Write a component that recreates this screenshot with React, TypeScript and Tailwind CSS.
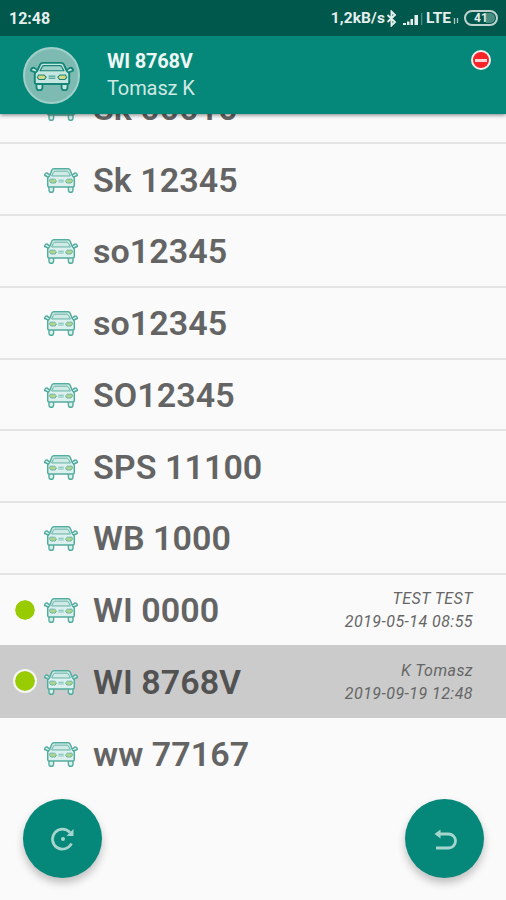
type Vehicle = {
  plate: string;
  online?: boolean;
  selected?: boolean;
  driver?: string;
  time?: string;
};

const vehicles: Vehicle[] = [
  { plate: "Sk 00010" },
  { plate: "Sk 12345" },
  { plate: "so12345" },
  { plate: "so12345" },
  { plate: "SO12345" },
  { plate: "SPS 11100" },
  { plate: "WB 1000" },
  { plate: "WI 0000", online: true, driver: "TEST TEST", time: "2019-05-14 08:55" },
  { plate: "WI 8768V", online: true, selected: true, driver: "K Tomasz", time: "2019-09-19 12:48" },
  { plate: "ww 77167" },
];

function CarIcon({ className, line, fill, glass, lamp }: { className: string; line: string; fill: string; glass: string; lamp: string }) {
  return (
    <svg className={className} viewBox="0 0 34 24" preserveAspectRatio="none" fill="none" stroke={line} strokeLinecap="round" strokeLinejoin="round">
      <path d="M5 17.500v3.500q0 2.300 2.300 2.300T9.600 21v-3.500M24.400 17.500v3.500q0 2.300 2.300 2.300T29 21v-3.500" fill={fill} strokeWidth="1.400" />
      <path d="M5.800 7 7.800 2.200Q8.400.8 10 .8h14q1.600 0 2.200 1.400L28.200 7l2.100 2.500v7.200q0 1.500-1.500 1.500H5.200q-1.500 0-1.500-1.500V9.500z" fill={fill} strokeWidth="1.500" />
      <path d="M7.800 7.300 9.500 3.900q.4-.9 1.300-.9h12.400q.9 0 1.300.9l1.700 3.400z" fill={glass} strokeWidth=".9" />
      <path d="M5.200 6.300 3 4.700Q.6 5 .7 7.200l3 1.200M28.800 6.300 31 4.700q2.400.3 2.300 2.500l-3 1.200" fill={fill} strokeWidth="1.400" />
      <path d="M6.500 10.700h4.200l1.800 1.700-1.300 2H7l-1.300-1.500zM27.500 10.700h-4.200l-1.800 1.700 1.300 2H27l1.300-1.500z" fill={lamp} strokeWidth=".8" />
      <path d="M14.700 11.700h4.600M14.700 13.400h4.600" strokeWidth=".7" />
    </svg>
  );
}

function StatusBar() {
  return (
    <div className="flex h-9 items-center justify-between bg-[#00574b] pt-px pr-[8px] pl-[9px] text-[#e4efed]">
      <span className="text-[16px] leading-9 font-bold">12:48</span>
      <div className="flex items-center">
        <span className="text-[15.500px] font-bold tracking-[0.1px]">1,2kB/s</span>
        <svg className="ml-px h-[17px] w-[11px]" viewBox="0 0 10 17" fill="none" stroke="currentColor" strokeWidth="1.900">
          <path d="m1 5 7.500 7L5 15.500v-14L8.500 5 1 12" />
        </svg>
        <svg className="ml-[6px] h-[14px] w-[20px]" viewBox="0 0 20 14" fill="currentColor">
          <path d="M0 13v-2h3v2zM4 13V9.500h2.500V13zM7.500 13V7H10v6zM11.500 13V3H15v10z" />
          <path d="M18 1h1.300v12H18z" opacity=".35" />
        </svg>
        <span className="ml-[3px] text-[15.500px] font-bold">LTE</span>
        <svg className="mt-[6px] ml-[2px] h-[7px] w-[6px]" viewBox="0 0 6 7" stroke="currentColor" fill="none">
          <path d="M1.500 0v6M4.500 0v5" strokeOpacity=".75" strokeWidth="1.300" />
        </svg>
        <div className="mb-px ml-[5px] flex h-[16px] w-[34px] items-center justify-center rounded-full border-2 border-[#bdd3cf] bg-[#00574b]">
          <span className="flex h-[10px] w-[27px] items-center justify-center rounded-full bg-[linear-gradient(90deg,#00574b_66%,#4b8c82_66%)] text-[12px] leading-none font-bold">41</span>
        </div>
      </div>
    </div>
  );
}

function Header() {
  return (
    <header className="relative z-10 shadow-[0_1px_4px_rgba(0,0,0,0.5)]">
      <StatusBar />
      <div className="flex h-[78px] items-start bg-[#058879] pr-[15px] pl-[23px]">
        <div className="mt-[10.500px] flex size-[57px] items-center justify-center rounded-full border-2 border-[#a0d0c9] bg-[#7dbbb2]">
          <CarIcon className="mt-[3px] h-[29px] w-[44px]" line="#148577" fill="#c5e6e1" glass="#9fd0c9" lamp="#d5d886" />
        </div>
        <div className="mt-[12px] ml-[27px] flex flex-1 flex-col">
          <span className="text-[20px] leading-[27px] font-bold tracking-[-0.2px] text-[#edf7f5]">WI 8768V</span>
          <span className="text-[20px] leading-[27px] tracking-[-0.1px] text-[#d0e8e4]">Tomasz K</span>
        </div>
        <div className="mt-[14px] flex size-[20px] items-center justify-center rounded-full border-2 border-[#f3eeee] bg-[#f9242a]">
          <div className="h-[3px] w-[12px] bg-[#ffd6d6]" />
        </div>
      </div>
    </header>
  );
}

function VehicleRow({ vehicle, last }: { vehicle: Vehicle; last: boolean }) {
  const border = vehicle.selected ? "border-[#cbcbcb] bg-[#cbcbcb]" : last ? "border-transparent" : vehicle.driver ? "border-[#cbcbcb]" : "border-[#e4e4e4]";
  return (
    <li className={`flex h-[71.750px] shrink-0 items-center border-b-2 pr-[33px] pl-[13px] ${border}`}>
      <div className="flex w-[24px] justify-center">
        {vehicle.online && (
          <span className={`size-[24px] rounded-full border-[2.500px] bg-[#99cc00] bg-clip-padding ${vehicle.selected ? "border-[#f5f7ef]" : "border-[#fafafa]"}`} />
        )}
      </div>
      <CarIcon className="mt-[2px] ml-[7px] h-[25px] w-[34px]" line="#53aca0" fill="#ddf0ed" glass="#d2eae6" lamp="#b3d58b" />
      <span className={`mt-px ml-[15px] text-[34px] leading-[44px] font-semibold tracking-[0.050px] whitespace-nowrap ${vehicle.selected ? "text-[#525252]" : "text-[#646464]"}`}>
        {vehicle.plate}
      </span>
      {vehicle.driver && (
        <div className="mt-px flex flex-1 flex-col text-right text-[16px] leading-[23px] tracking-[0.450px] whitespace-nowrap text-[#666] italic">
          <span>{vehicle.driver}</span>
          <span>{vehicle.time}</span>
        </div>
      )}
    </li>
  );
}

export default function App() {
  return (
    <div className="relative flex h-[900px] w-[506px] flex-col overflow-hidden bg-[#fafafa] font-[Roboto,sans-serif]">
      <Header />
      <main className="flex min-h-0 flex-1 flex-col overflow-hidden">
        <ul className="-mt-[41.500px] flex flex-col">
          {vehicles.map((vehicle, i) => (
            <VehicleRow key={i} vehicle={vehicle} last={i === vehicles.length - 1} />
          ))}
        </ul>
      </main>
      <div className="absolute inset-x-0 bottom-[22px] flex justify-between pr-[22px] pl-[23px]">
        <button className="flex size-[79px] items-center justify-center rounded-full bg-[#058879] shadow-[0_5px_9px_rgba(0,0,0,0.24)]">
          <svg className="size-[24px]" viewBox="0 0 24 24" fill="none" stroke="#a6d5ce" strokeWidth="2.800">
            <path d="M20.500 16.500A10 10 0 1 1 19 5.500" />
            <path d="M22.500 2v7H15.500z" fill="#a6d5ce" stroke="none" />
            <circle cx="12" cy="12" r="2" fill="#a6d5ce" stroke="none" />
          </svg>
        </button>
        <button className="flex size-[79px] items-center justify-center rounded-full bg-[#058879] shadow-[0_5px_9px_rgba(0,0,0,0.24)]">
          <svg className="size-[24px]" viewBox="0 0 24 24" fill="none" stroke="#a6d5ce" strokeWidth="2.800">
            <path d="M5 7h10.500a7 7 0 0 1 0 14H3" />
            <path d="M1.500 7 7.500 2.500v9z" fill="#a6d5ce" stroke="none" />
          </svg>
        </button>
      </div>
    </div>
  );
}
